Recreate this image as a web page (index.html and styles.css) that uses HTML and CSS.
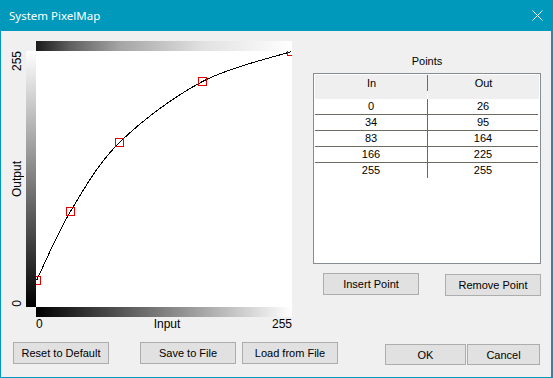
FILE: index.html
```html
<!DOCTYPE html>
<html lang="en">
<head>
    <meta charset="UTF-8">
    <title>System PixelMap</title>
    <link rel="stylesheet" href="styles.css">
</head>
<body>
    <div class="window">
        <div class="titlebar">
            <span class="title">System PixelMap</span>
            <svg class="close" width="11" height="11" viewBox="0 0 11 11">
                <path d="M0.5 0.5 L10.5 10.5 M10.5 0.5 L0.5 10.5" stroke="#fff" stroke-width="1" fill="none"/>
            </svg>
        </div>

        <div class="content">
            <div class="main">
                <div class="chart">
                    <div class="bar-top"></div>
                    <div class="y-labels">
                        <span class="y-max">255</span>
                        <span class="y-mid">Output</span>
                        <span class="y-min">0</span>
                    </div>
                    <div class="bar-left"></div>
                    <div class="plot">
                        <svg width="256" height="256" viewBox="0 0 256 256">
                            <path class="curve" d="M0.5 229.5 C6.17 218 20.67 183.5 34.5 160.5 C48.33 137.5 61.5 113.17 83.5 91.5 C105.5 69.83 137.83 45.67 166.5 30.5 C195.17 15.33 240.67 5.5 255.5 0.5"
                                  stroke="#000" stroke-width="1" fill="none"/>
                            <g class="handles" stroke="#e00000" stroke-width="1" fill="none">
                                <rect x="-3.5" y="225.5" width="8" height="8"/>
                                <rect x="30.5" y="156.5" width="8" height="8"/>
                                <rect x="79.5" y="87.5" width="8" height="8"/>
                                <rect x="162.5" y="26.5" width="8" height="8"/>
                                <rect x="251.5" y="-3.5" width="8" height="8"/>
                            </g>
                        </svg>
                    </div>
                    <div class="bar-bottom"></div>
                    <div class="x-labels">
                        <span>0</span>
                        <span class="x-mid">Input</span>
                        <span class="x-max">255</span>
                    </div>
                </div>

                <div class="side">
                    <div class="points-title">Points</div>
                    <div class="listview">
                        <div class="lv-head">
                            <span class="lv-head-in">In</span>
                            <span>Out</span>
                        </div>
                        <div class="lv-row"><span>0</span><span>26</span></div>
                        <div class="lv-row"><span>34</span><span>95</span></div>
                        <div class="lv-row"><span>83</span><span>164</span></div>
                        <div class="lv-row"><span>166</span><span>225</span></div>
                        <div class="lv-row"><span>255</span><span>255</span></div>
                    </div>
                    <div class="side-buttons">
                        <button class="btn btn-insert">Insert Point</button>
                        <button class="btn btn-remove">Remove Point</button>
                    </div>
                </div>
            </div>

            <div class="footer">
                <button class="btn">Reset to Default</button>
                <button class="btn btn-save">Save to File</button>
                <button class="btn btn-load">Load from File</button>
                <button class="btn btn-ok">OK</button>
                <button class="btn btn-cancel">Cancel</button>
            </div>
        </div>
    </div>
</body>
</html>
```

FILE: styles.css
```css
* {
    box-sizing: border-box;
}
body {
    margin: 0;
}

.window {
    width: 553px;
    height: 378px;
    background-color: #0099bc;
    display: flex;
    flex-direction: column;
    font-family: "Liberation Sans", Arial, sans-serif;
    font-size: 11px;
    color: #000;
}

.titlebar {
    height: 31px;
    flex: none;
    display: flex;
    align-items: center;
    justify-content: space-between;
    padding: 0 10px 0 9px;
    color: #fff;
    font-family: "Noto Sans", sans-serif;
    font-size: 11.5px;
}
.close {
    display: block;
}

.content {
    flex: 1;
    margin: 0 2px 1px 1px;
    background-color: #f0f0f0;
    padding-top: 10px;
}
.main {
    display: flex;
}

/* chart: label column, gradient bar, plot */
.chart {
    display: grid;
    grid-template-columns: 25px 10px 256px;
    grid-template-rows: 10px 256px 10px 14px;
    font-size: 12px;
    line-height: 14px;
}
.bar-top {
    grid-column: 3;
    grid-row: 1;
    background: linear-gradient(to right, #1a1a1a 0%, #5f5f5f 13.3%, #a4a4a4 32.5%, #e1e1e1 65.1%, #fff 100%);
}
.y-labels {
    grid-column: 1;
    grid-row: 2;
    display: grid;
    grid-template-rows: 1fr auto 1fr;
    justify-items: end;
    padding-right: 2px;
}
.y-labels span {
    writing-mode: vertical-rl;
    transform: rotate(180deg);
}
.y-max {
    align-self: start;
}
.y-min {
    align-self: end;
}
.bar-left {
    grid-column: 2;
    grid-row: 2;
    background: linear-gradient(to bottom, #fff, #000);
}
.plot {
    grid-column: 3;
    grid-row: 2;
    background-color: #fff;
}
.plot svg {
    display: block;
}
.curve,
.handles {
    shape-rendering: crispEdges;
}
.bar-bottom {
    grid-column: 3;
    grid-row: 3;
    background: linear-gradient(to right, #000, #fff);
}
.x-labels {
    grid-column: 3;
    grid-row: 4;
    display: grid;
    grid-template-columns: 1fr auto 1fr;
}
.x-mid {
    padding-left: 6px;
}
.x-max {
    text-align: right;
}

/* points list */
.side {
    width: 228px;
    margin-left: 21px;
    padding-top: 14px;
}
.points-title {
    text-align: center;
    line-height: 13px;
}
.listview {
    margin-top: 5px;
    height: 191px;
    border: 1px solid #878b92;
    background-color: #fff;
    padding: 1px;
}
.lv-head {
    display: grid;
    grid-template-columns: 113px 111px;
    height: 24px;
    background-color: #efefef;
    text-align: center;
    line-height: 13px;
}
.lv-head span {
    padding-top: 2px;
}
.lv-head-in {
    background: linear-gradient(#6b6b60 16px, #fff 16px) right top / 1px 100% no-repeat;
}
.lv-row {
    display: grid;
    grid-template-columns: 113px 110px;
    width: 223px;
    height: 16px;
    border-bottom: 1px solid #6b6b60;
    text-align: center;
    line-height: 15px;
}
.lv-row:last-child {
    border-bottom-color: transparent;
}
.lv-row span:first-child {
    border-right: 1px solid #6b6b60;
}

.btn {
    height: 22px;
    width: 96px;
    padding: 0;
    background-color: #e1e1e1;
    border: 1px solid #adadad;
    font-family: "Liberation Sans", Arial, sans-serif;
    font-size: 11px;
    color: #000;
}

.side-buttons {
    display: flex;
    align-items: flex-start;
    margin-top: 9px;
}
.btn-insert {
    margin-left: 10px;
}
.btn-remove {
    margin-left: 26px;
    margin-top: 1px;
}

.footer {
    display: flex;
    align-items: flex-start;
    margin-top: 11px;
    padding-left: 12px;
}
.btn-save {
    margin-left: 31px;
}
.btn-load {
    margin-left: 6px;
}
.btn-ok {
    width: 81px;
    height: 21px;
    margin-left: 47px;
    margin-top: 2px;
}
.btn-cancel {
    width: 73px;
    height: 21px;
    margin-left: 1px;
    margin-top: 2px;
}
```
